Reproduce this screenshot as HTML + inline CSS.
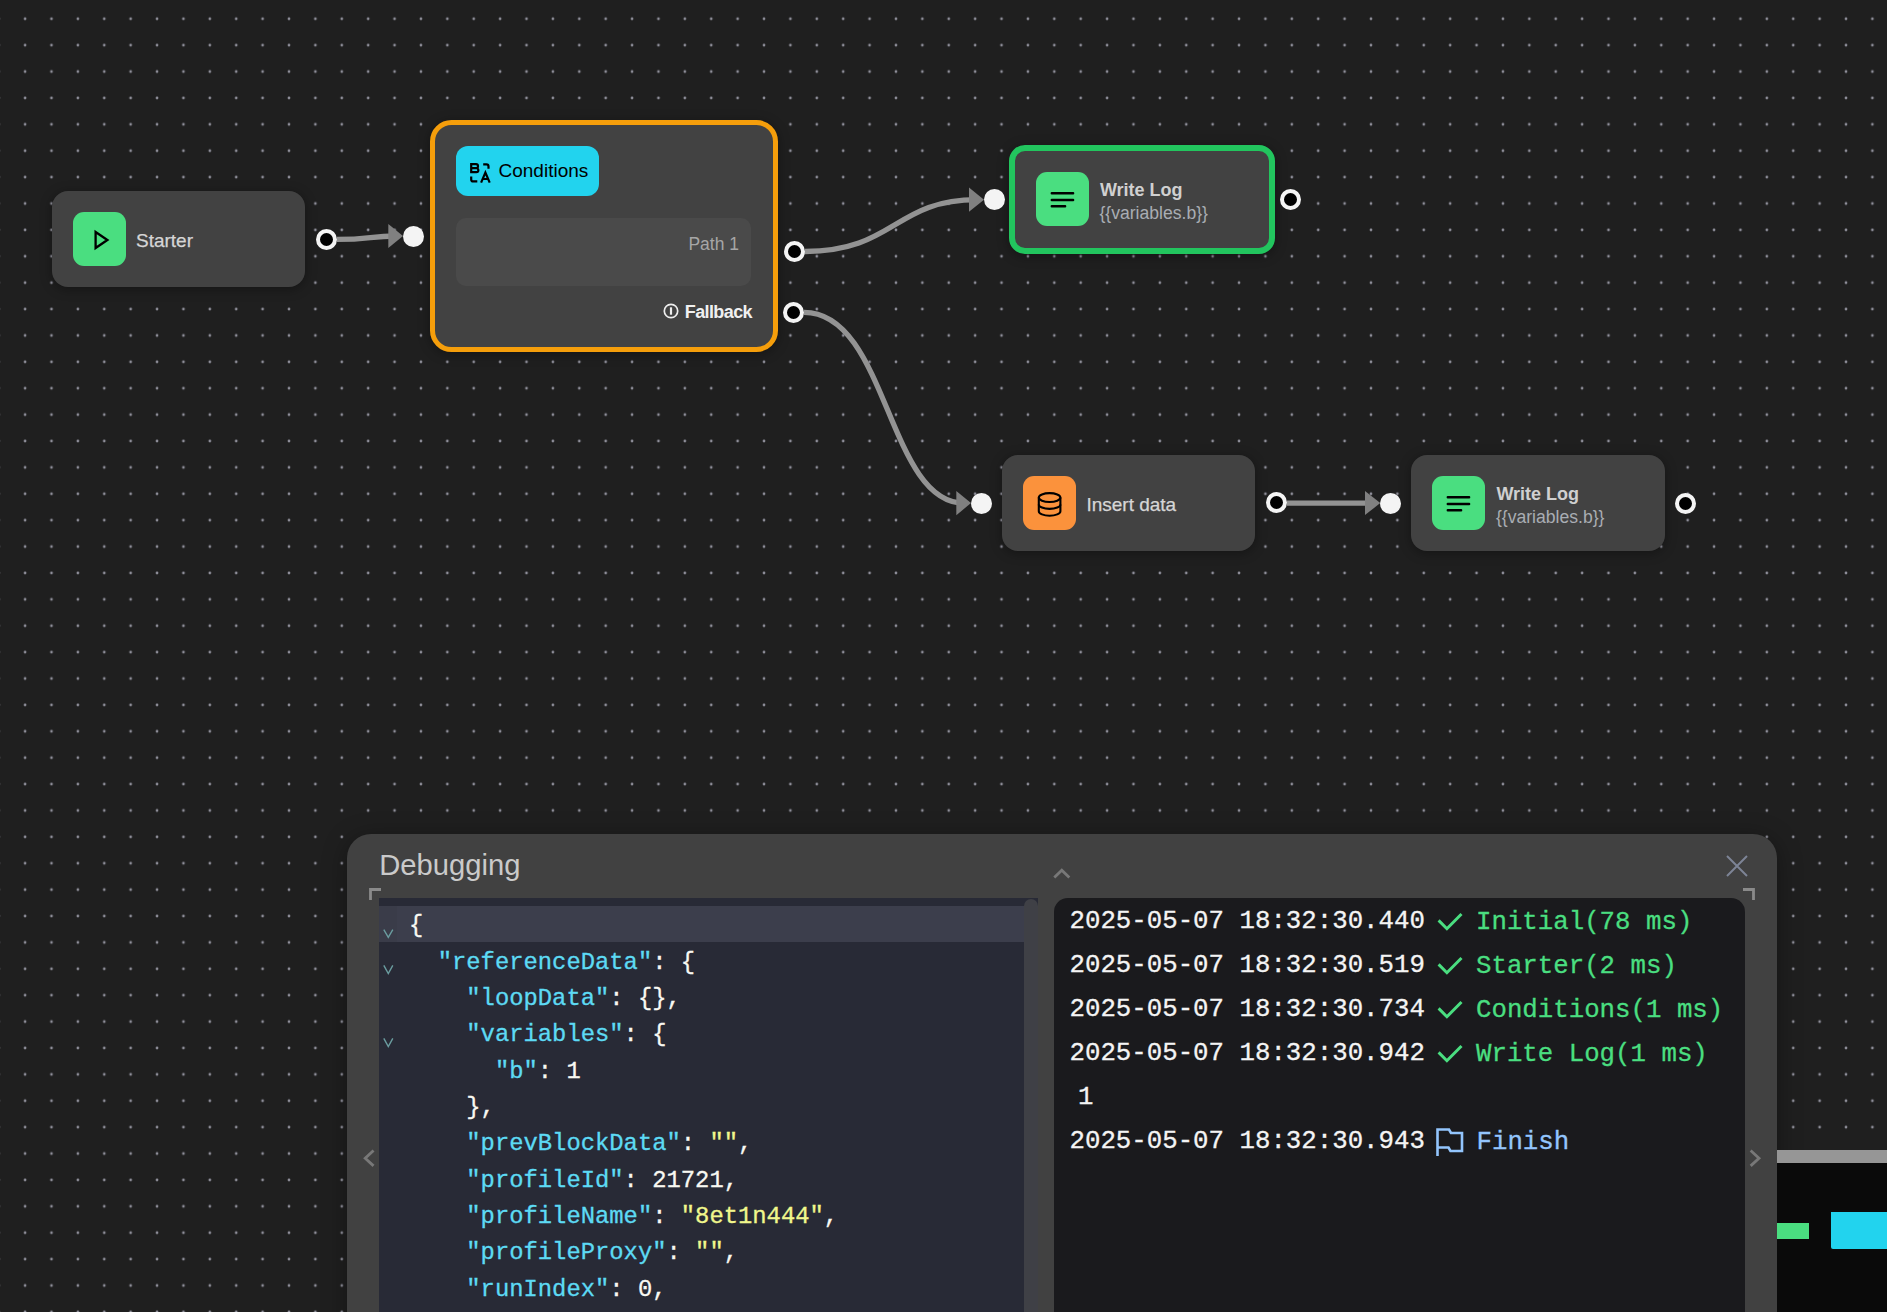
<!DOCTYPE html>
<html><head><meta charset="utf-8">
<style>
html,body{margin:0;padding:0;width:1887px;height:1312px;overflow:hidden;background:#1f1f1f;font-family:"Liberation Sans",sans-serif;}
.abs{position:absolute;}
#bg{position:absolute;left:0;top:0;}
.node{position:absolute;background:#424242;border-radius:16px;box-shadow:0 2px 12px rgba(0,0,0,0.35);}
.icon{position:absolute;left:21px;top:21px;width:53px;height:54px;border-radius:11px;}
.ntitle{position:absolute;color:#d6d6d6;font-size:18px;white-space:nowrap;line-height:20px;}
.handle{position:absolute;width:21px;height:21px;box-sizing:border-box;border-radius:50%;}
.hout{background:#000;border:4.2px solid #f4f4f4;}
.hin{background:#f4f4f4;}
.k{color:#5ddaf4;}.s{color:#f1f78c;}
.mono{font-family:"Liberation Mono",monospace;white-space:pre;-webkit-text-stroke:0.3px currentColor;}
</style></head>
<body>
<svg id="bg" width="1887" height="1312">
  <defs>
    <pattern id="dots" x="25.1" y="18.8" width="26.39" height="26.39" patternUnits="userSpaceOnUse">
      <circle cx="0" cy="0" r="1.35" fill="#8f8f9a"/>
      <circle cx="26.39" cy="0" r="1.35" fill="#8f8f9a"/>
      <circle cx="0" cy="26.39" r="1.35" fill="#8f8f9a"/>
      <circle cx="26.39" cy="26.39" r="1.35" fill="#8f8f9a"/>
    </pattern>
  </defs>
  <rect x="0" y="0" width="1887" height="1312" fill="url(#dots)"/>
</svg>

<!-- edges -->
<svg class="abs" style="left:0;top:0" width="1887" height="1312">
  <g fill="none" stroke="#939393" stroke-width="5.3">
    <path d="M337,239.4 C370,239.4 370,236 396,236"/>
    <path d="M805,251.5 C894.5,251.5 894.5,199.7 977,199.7"/>
    <path d="M804,312.3 C887.5,312.3 887.5,503.1 964,503.1"/>
    <path d="M1287,503.2 L1373,503.2"/>
  </g>
  <g fill="#808080">
    <path d="M388.3,223.9 L403,236 L388.3,248.1 Z"/>
    <path d="M969,187.6 L984,199.7 L969,211.8 Z"/>
    <path d="M956.3,491 L971,503.1 L956.3,515.2 Z"/>
    <path d="M1365,490.9 L1380.3,503 L1365,515.1 Z"/>
  </g>
</svg>

<!-- Starter -->
<div class="node" style="left:52px;top:191px;width:253px;height:96.2px;">
  <div class="icon" style="background:#4ade80;">
    <svg width="53" height="54" style="position:absolute;left:0;top:0">
      <path d="M22.6,20 L34.4,28 L22.6,36 Z" fill="none" stroke="#000" stroke-width="2.3" stroke-linejoin="miter"/>
    </svg>
  </div>
  <div class="ntitle" style="left:84px;top:39.8px;font-size:19px;-webkit-text-stroke:0.25px #d6d6d6;">Starter</div>
</div>
<div class="handle hout" style="left:315.9px;top:228.9px;"></div>

<!-- Conditions -->
<div class="node" style="left:429.7px;top:119.5px;width:348.2px;box-sizing:border-box;border:5.5px solid #f59e0b;border-radius:21.5px;height:232.5px;"></div>
<div class="abs" style="left:456px;top:146px;width:143px;height:50px;border-radius:12px;background:#22d3ee;">
  <svg width="30" height="30" style="position:absolute;left:11px;top:14px" viewBox="0 0 30 30">
    <g fill="none" stroke="#000" stroke-width="2.2">
      <path d="M4.2,4.2 H9 a2,2 0 0 1 0,4 H4.2 Z M4.2,8.2 H9.4 a1.95,1.95 0 0 1 0,3.9 H4.2 Z"/>
      <path d="M16.2,4.4 H19.5 a2,2 0 0 1 2,2 V8.8"/>
      <path d="M4.2,16.4 V19.4 a2,2 0 0 0 2,2 H10.3"/>
      <path d="M14.1,22.6 L18.4,12.6 L22.7,22.6 M15.6,19 H21.2"/>
    </g>
  </svg>
  <div class="abs" style="left:42.5px;top:14.9px;font-size:19px;line-height:20px;color:#000;white-space:nowrap;">Conditions</div>
</div>
<div class="abs" style="left:455.8px;top:217.7px;width:295.4px;height:68px;border-radius:10px;background:#4a4a4a;"></div>
<div class="abs" style="left:640px;top:234.4px;width:99px;text-align:right;font-size:17.5px;line-height:20px;color:#a6a6a6;">Path 1</div>
<div class="abs" style="left:600px;top:301.8px;width:152px;text-align:right;font-size:18px;line-height:20px;color:#f0f0f0;font-weight:bold;white-space:nowrap;letter-spacing:-0.6px;">Fallback</div>
<svg class="abs" style="left:662.3px;top:302.2px" width="18" height="18" viewBox="0 0 18 18"><circle cx="9" cy="9" r="6.7" fill="none" stroke="#eeeeee" stroke-width="1.7"/><path d="M9,5.3 V12.7" stroke="#eeeeee" stroke-width="2.2"/></svg>
<div class="handle hin" style="left:403px;top:225.5px;"></div>
<div class="handle hout" style="left:783.8px;top:241px;"></div>
<div class="handle hout" style="left:783px;top:301.8px;"></div>

<!-- Write Log 1 (selected) -->
<div class="node" style="left:1008.9px;top:145px;width:266.3px;height:109.1px;box-sizing:border-box;border:6.3px solid #22c55e;border-radius:16px;">
  <div class="icon" style="left:21px;top:21px;background:#4ade80;">
    <svg width="53" height="54" style="position:absolute;left:0;top:0"><g stroke="#000" stroke-width="2.45" stroke-linecap="round"><path d="M15.8,21.2 H37.1 M15.8,27.9 H37.1 M15.8,34.3 H29.1"/></g></svg>
  </div>
  <div class="ntitle" style="left:85px;top:29px;font-weight:bold;color:#d0d0d0;">Write Log</div>
  <div class="ntitle" style="left:84.5px;top:51.6px;color:#a9adb3;font-size:17.6px;">{{variables.b}}</div>
</div>
<div class="handle hin" style="left:983.7px;top:189.2px;"></div>
<div class="handle hout" style="left:1279.5px;top:188.9px;"></div>

<!-- Insert data -->
<div class="node" style="left:1002.4px;top:454.9px;width:253px;height:96.1px;">
  <div class="icon" style="background:#fb923c;">
    <svg width="53" height="54" style="position:absolute;left:0;top:0" viewBox="0 0 53 54">
      <g fill="none" stroke="#000" stroke-width="2.1">
        <ellipse cx="26.6" cy="21.6" rx="10.8" ry="4.45"/>
        <path d="M15.8,21.6 V35.2 A10.8,4.5 0 0 0 37.4,35.2 V21.6"/>
        <path d="M15.8,28.4 A10.8,4.5 0 0 0 37.4,28.4"/>
      </g>
    </svg>
  </div>
  <div class="ntitle" style="left:84px;top:39.8px;font-size:19px;-webkit-text-stroke:0.25px #d6d6d6;">Insert data</div>
</div>
<div class="handle hin" style="left:970.7px;top:492.6px;"></div>
<div class="handle hout" style="left:1265.9px;top:492.3px;"></div>

<!-- Write Log 2 -->
<div class="node" style="left:1411.4px;top:455px;width:253.3px;height:95.7px;">
  <div class="icon" style="background:#4ade80;">
    <svg width="53" height="54" style="position:absolute;left:0;top:0"><g stroke="#000" stroke-width="2.45" stroke-linecap="round"><path d="M15.8,21.2 H37.1 M15.8,27.9 H37.1 M15.8,34.3 H29.1"/></g></svg>
  </div>
  <div class="ntitle" style="left:85px;top:29px;font-weight:bold;color:#d0d0d0;">Write Log</div>
  <div class="ntitle" style="left:84.5px;top:51.6px;color:#a9adb3;font-size:17.6px;">{{variables.b}}</div>
</div>
<div class="handle hin" style="left:1379.5px;top:492.5px;"></div>
<div class="handle hout" style="left:1675.2px;top:492.5px;"></div>


<!-- Debug panel -->
<div class="abs" style="left:347px;top:834px;width:1430px;height:520px;border-radius:24px;background:#414141;box-shadow:0 4px 24px rgba(0,0,0,0.35);"></div>
<div class="abs" style="left:379.2px;top:849.2px;font-size:29.2px;line-height:32px;color:#cacaca;white-space:nowrap;">Debugging</div>
<!-- chevron up -->
<svg class="abs" style="left:1050px;top:862px" width="24" height="22"><path d="M5.3,14.6 L11.8,8.3 L18.3,14.6" fill="none" stroke="#787878" stroke-width="2.8" stroke-linecap="square"/></svg>
<!-- close -->
<svg class="abs" style="left:1724px;top:853px" width="26" height="26"><path d="M3,3 L23,23 M23,3 L3,23" fill="none" stroke="#7d8496" stroke-width="2"/></svg>
<!-- brackets -->
<svg class="abs" style="left:365px;top:885px" width="20" height="20"><path d="M5.5,15 V4.5 H16" fill="none" stroke="#8a8a8a" stroke-width="2.8"/></svg>
<svg class="abs" style="left:1740px;top:885px" width="20" height="20"><path d="M3,4.5 H13.5 V15" fill="none" stroke="#8a8a8a" stroke-width="2.8"/></svg>
<!-- left/right chevrons -->
<svg class="abs" style="left:358px;top:1146px" width="22" height="24"><path d="M14.5,5.5 L7.2,12.2 L14.5,18.9" fill="none" stroke="#787878" stroke-width="2.8" stroke-linecap="square"/></svg>
<svg class="abs" style="left:1745px;top:1146px" width="22" height="24"><path d="M6.7,5.5 L14,12.2 L6.7,18.9" fill="none" stroke="#787878" stroke-width="2.8" stroke-linecap="square"/></svg>

<!-- code editor -->
<div class="abs" style="left:379.2px;top:898px;width:658.8px;height:414px;background:#282a36;overflow:hidden;">
  <div class="abs" style="left:0;top:8px;width:644.6px;height:36px;background:#3c3e4c;"></div>
  <div class="abs" style="left:0;top:8px;width:17.6px;height:36px;background:#3a3c49;"></div>
  <div class="abs" style="left:644.8px;top:0.75px;width:14px;height:420px;background:#3f4046;border-radius:7px 7px 0 0;"></div>
</div>
<div id="code" class="abs mono" style="left:409.1px;top:908.3px;font-size:23.83px;line-height:36.34px;color:#f8f8f2;">{
  <span class="k">"referenceData"</span>: {
    <span class="k">"loopData"</span>: {},
    <span class="k">"variables"</span>: {
      <span class="k">"b"</span>: 1
    },
    <span class="k">"prevBlockData"</span>: <span class="s">""</span>,
    <span class="k">"profileId"</span>: 21721,
    <span class="k">"profileName"</span>: <span class="s">"8et1n444"</span>,
    <span class="k">"profileProxy"</span>: <span class="s">""</span>,
    <span class="k">"runIndex"</span>: 0,</div>

<svg class="abs" style="left:380px;top:906px" width="20" height="150"><g transform="translate(-380,-906)" fill="none" stroke="#6a9c9f" stroke-width="1.4"><path d="M383.8,929.6 L388.3,937.3 L392.8,929.6"/><path d="M383.8,965.4 L388.3,973.6 L392.8,965.4"/><path d="M383.8,1038.4 L388.3,1046.6 L392.8,1038.4"/></g></svg>
<!-- log -->
<div class="abs" style="left:1054.2px;top:898px;width:690.6px;height:430px;background:#1a1a1d;border-radius:14px 14px 0 0;"></div>
<div id="log" class="abs mono" style="left:1069.5px;top:900px;font-size:25.75px;line-height:44px;color:#f4f4f4;">2025-05-07 18:32:30.440
2025-05-07 18:32:30.519
2025-05-07 18:32:30.734
2025-05-07 18:32:30.942</div>
<div class="abs mono" style="left:1476px;top:900.5px;font-size:25.75px;line-height:44px;color:#4ade80;">Initial(78 ms)
Starter(2 ms)
Conditions(1 ms)
Write Log(1 ms)</div>
<div class="abs mono" style="left:1078px;top:1076px;font-size:25.75px;line-height:44px;color:#f4f4f4;">1</div>
<div class="abs mono" style="left:1069.5px;top:1120px;font-size:25.75px;line-height:44px;color:#f4f4f4;">2025-05-07 18:32:30.943</div>
<div class="abs mono" style="left:1476.5px;top:1120.5px;font-size:25.75px;line-height:44px;color:#93c5fd;">Finish</div>
<svg class="abs" style="left:1434px;top:908px" width="32" height="160"><g fill="none" stroke="#4ade80" stroke-width="3"><path d="M4.6,12.4 L12.9,20.7 L27.5,6"/><path d="M4.6,56.4 L12.9,64.7 L27.5,50"/><path d="M4.6,100.4 L12.9,108.7 L27.5,94"/><path d="M4.6,144.4 L12.9,152.7 L27.5,138"/></g></svg>
<svg class="abs" style="left:1434px;top:1126px" width="32" height="34"><path d="M3.5,30 V3.5 H15 L17,7 H28 V25 H16.5 L14.5,21.5 H3.5" fill="none" stroke="#93c5fd" stroke-width="2.6"/></svg>

<!-- Minimap -->
<div class="abs" style="left:1777px;top:1150px;width:110px;height:13px;background:#969696;"></div>
<div class="abs" style="left:1777px;top:1163px;width:110px;height:149px;background:#0a0a0a;"></div>
<div class="abs" style="left:1777px;top:1223px;width:32px;height:16px;background:#4ade80;"></div>
<div class="abs" style="left:1831px;top:1212px;width:60px;height:37px;background:#22d3ee;border-radius:0 0 0 2px;"></div>

</body></html>
